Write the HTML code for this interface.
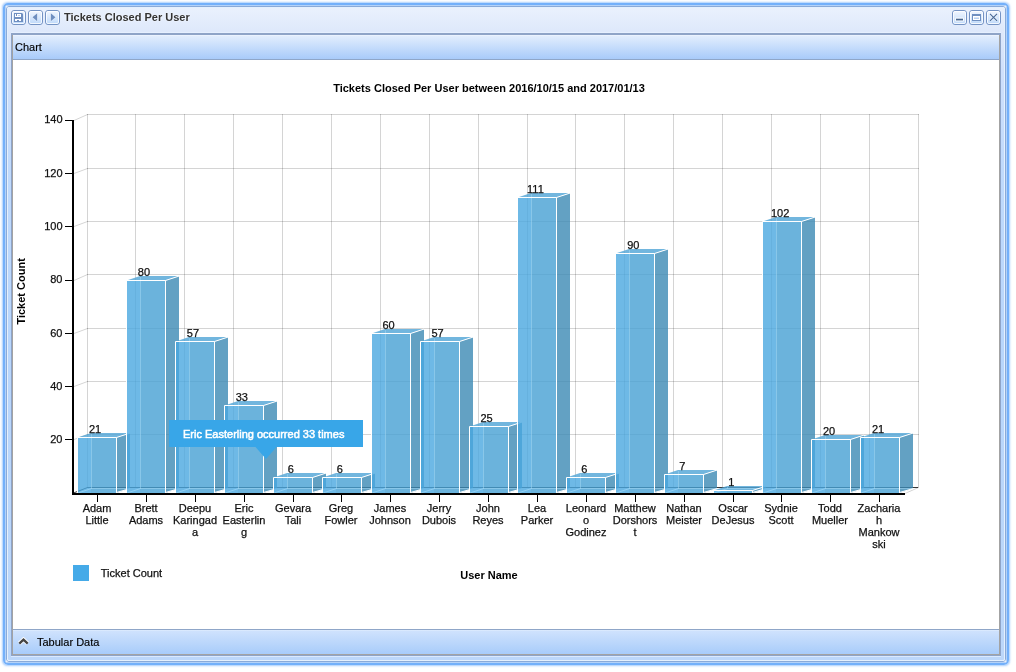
<!DOCTYPE html>
<html><head><meta charset="utf-8">
<style>
html,body{margin:0;padding:0;width:1016px;height:672px;overflow:hidden;background:#fff;font-family:"Liberation Sans",sans-serif;}
.a{position:absolute;box-sizing:border-box}
.t{will-change:transform}
svg text.lbl{font-family:"Liberation Sans",sans-serif;font-size:11px;fill:#111;stroke:#111;stroke-width:0.25px}
svg text.ttl{font-family:"Liberation Sans",sans-serif;font-size:11px;font-weight:bold;fill:#000}
svg text.tip{font-family:"Liberation Sans",sans-serif;font-size:11px;fill:#fff;stroke:#fff;stroke-width:0.5px}
</style></head><body>
<!-- window frame -->
<div class="a" style="left:3px;top:3px;width:1006px;height:662px;border-radius:5px;box-shadow:0 0 2px 0.5px rgba(110,172,250,0.6)"></div>
<div class="a" style="left:3px;top:3px;width:1006px;height:662px;border:2px solid #73b0fa;border-radius:5px"></div>
<div class="a" style="left:5px;top:5px;width:1002px;height:658px;border:1px solid #b4d2f8;border-radius:2px"></div>
<div class="a" style="left:6px;top:6px;width:1000px;height:656px;border:1px solid #8aaad8;border-radius:3px"></div>
<div class="a" style="left:7px;top:7px;width:998px;height:654px;border:1px solid #e4f0fe;border-radius:2px;
 background:linear-gradient(#eaf1fd 0px,#dfe9fb 22px,#cfe0fc 62px,#c0dafc 160px,#b8d6fc 330px,#bcd7fa 654px)"></div>
<!-- title -->
<div class="a t" style="left:64px;top:10px;font-weight:bold;font-size:11px;color:#333;line-height:14px;white-space:nowrap;text-shadow:0 0 2px #fff">Tickets Closed Per User</div>
<!-- panel -->
<div class="a" style="left:11px;top:32px;width:990px;height:625px;border-top:1px solid rgba(235,244,255,0.6);border-bottom:1px solid rgba(225,238,255,0.85)"></div>
<div class="a" style="left:11px;top:33px;width:990px;height:623px;border:1px solid #8fa4c7;border-top-width:2px"></div>
<div class="a" style="left:12px;top:35px;width:988px;height:620px;border:1px solid #a3a3a3;border-top:0"></div>
<div class="a" style="left:13px;top:35px;width:986px;height:24px;background:linear-gradient(#f4f8ff 0px,#e2edfd 1px,#a8cbfa 24px)"></div>
<div class="a" style="left:13px;top:59px;width:986px;height:1px;background:#8fa6c8"></div>
<div class="a" style="left:13px;top:60px;width:986px;height:569px;background:#fff"></div>
<div class="a" style="left:13px;top:629px;width:986px;height:1px;background:#8fa6c8"></div>
<div class="a" style="left:13px;top:630px;width:986px;height:24px;background:linear-gradient(#e4f0fe 0px,#cfe2fd 1px,#a8ccfa 24px)"></div>
<div class="a t" style="left:15px;top:41px;font-size:11px;color:#000;-webkit-text-stroke:0.15px #000;line-height:13px">Chart</div>
<div class="a t" style="left:37px;top:636px;font-size:11px;color:#000;-webkit-text-stroke:0.15px #000;line-height:13px">Tabular Data</div>
<svg width="1016" height="672" style="position:absolute;left:0;top:0;will-change:transform">
<defs>
 <linearGradient id="bg" x1="0" y1="0" x2="0" y2="1"><stop offset="0" stop-color="#f4f8ff"/><stop offset="1" stop-color="#bcd8fa"/></linearGradient>
</defs>
<rect x="11.5" y="10.5" width="14" height="14" rx="2.5" fill="url(#bg)" stroke="#7493c4" stroke-width="1"/><rect x="12.5" y="11.5" width="12" height="12" rx="1.5" fill="none" stroke="#fff" stroke-opacity="0.8" stroke-width="1"/>
<rect x="28.5" y="10.5" width="14" height="14" rx="2.5" fill="url(#bg)" stroke="#7493c4" stroke-width="1"/><rect x="29.5" y="11.5" width="12" height="12" rx="1.5" fill="none" stroke="#fff" stroke-opacity="0.8" stroke-width="1"/>
<rect x="45.5" y="10.5" width="14" height="14" rx="2.5" fill="url(#bg)" stroke="#7493c4" stroke-width="1"/><rect x="46.5" y="11.5" width="12" height="12" rx="1.5" fill="none" stroke="#fff" stroke-opacity="0.8" stroke-width="1"/>
<rect x="952.5" y="10.5" width="14" height="14" rx="2.5" fill="url(#bg)" stroke="#7493c4" stroke-width="1"/><rect x="953.5" y="11.5" width="12" height="12" rx="1.5" fill="none" stroke="#fff" stroke-opacity="0.8" stroke-width="1"/>
<rect x="969.5" y="10.5" width="14" height="14" rx="2.5" fill="url(#bg)" stroke="#7493c4" stroke-width="1"/><rect x="970.5" y="11.5" width="12" height="12" rx="1.5" fill="none" stroke="#fff" stroke-opacity="0.8" stroke-width="1"/>
<rect x="986.5" y="10.5" width="14" height="14" rx="2.5" fill="url(#bg)" stroke="#7493c4" stroke-width="1"/><rect x="987.5" y="11.5" width="12" height="12" rx="1.5" fill="none" stroke="#fff" stroke-opacity="0.8" stroke-width="1"/>
<path d="M14,13 H22 L23,14 V22 H14 Z" fill="#6f8fc0"/>
<rect x="15" y="14" width="6" height="3" fill="#fff"/>
<rect x="16" y="14" width="1" height="2" fill="#6f8fc0"/>
<rect x="18" y="15" width="2" height="1" fill="#b8cdec"/>
<path d="M15,19 H21 V21 H19 V20 H17 V21 H15 Z" fill="#fff"/>
<path d="M37.2,13.3 V21.2 L32.5,17.25 Z" fill="#6f8fc0" stroke="#fff" stroke-width="0.8" stroke-opacity="0.7" paint-order="stroke"/>
<path d="M50.8,13.3 V21.2 L55.5,17.25 Z" fill="#6f8fc0" stroke="#fff" stroke-width="0.8" stroke-opacity="0.7" paint-order="stroke"/>
<rect x="955" y="17.5" width="9" height="4" fill="#fff" opacity="0.8" rx="1"/>
<rect x="956" y="18.7" width="7" height="1.7" fill="#4a6890"/>
<rect x="972.5" y="14.5" width="8" height="6" fill="#fff" stroke="#6f8fc0" stroke-width="1"/>
<rect x="972" y="14" width="9" height="2" fill="#6f8fc0"/>
<rect x="974" y="17.5" width="5" height="1.5" fill="#b8d0f0"/>
<path d="M990,13.8 L997,20.8 M997,13.8 L990,20.8" stroke="#fff" stroke-opacity="0.6" stroke-width="2.4"/>
<path d="M990,13.8 L997,20.8 M997,13.8 L990,20.8" stroke="#4a6a98" stroke-width="1.2"/>
<!-- footer chevron -->
<polyline points="19.3,643.6 23.5,639.6 27.7,643.6" fill="none" stroke="#fff" stroke-width="4.2" opacity="0.95"/>
<polyline points="19.3,643.6 23.5,639.6 27.7,643.6" fill="none" stroke="#454545" stroke-width="2.3"/>
<line x1="87" y1="434.5" x2="919" y2="434.5" stroke="#000" stroke-opacity="0.17" stroke-width="1" />
<line x1="87" y1="381.5" x2="919" y2="381.5" stroke="#000" stroke-opacity="0.17" stroke-width="1" />
<line x1="87" y1="328.5" x2="919" y2="328.5" stroke="#000" stroke-opacity="0.17" stroke-width="1" />
<line x1="87" y1="274.5" x2="919" y2="274.5" stroke="#000" stroke-opacity="0.17" stroke-width="1" />
<line x1="87" y1="221.5" x2="919" y2="221.5" stroke="#000" stroke-opacity="0.17" stroke-width="1" />
<line x1="87" y1="168.5" x2="919" y2="168.5" stroke="#000" stroke-opacity="0.17" stroke-width="1" />
<line x1="87" y1="114.5" x2="919" y2="114.5" stroke="#000" stroke-opacity="0.17" stroke-width="1" />
<line x1="87.5" y1="114" x2="87.5" y2="488" stroke="#000" stroke-opacity="0.17" stroke-width="1" />
<line x1="135.5" y1="114" x2="135.5" y2="488" stroke="#000" stroke-opacity="0.17" stroke-width="1" />
<line x1="184.5" y1="114" x2="184.5" y2="488" stroke="#000" stroke-opacity="0.17" stroke-width="1" />
<line x1="233.5" y1="114" x2="233.5" y2="488" stroke="#000" stroke-opacity="0.17" stroke-width="1" />
<line x1="282.5" y1="114" x2="282.5" y2="488" stroke="#000" stroke-opacity="0.17" stroke-width="1" />
<line x1="331.5" y1="114" x2="331.5" y2="488" stroke="#000" stroke-opacity="0.17" stroke-width="1" />
<line x1="380.5" y1="114" x2="380.5" y2="488" stroke="#000" stroke-opacity="0.17" stroke-width="1" />
<line x1="429.5" y1="114" x2="429.5" y2="488" stroke="#000" stroke-opacity="0.17" stroke-width="1" />
<line x1="478.5" y1="114" x2="478.5" y2="488" stroke="#000" stroke-opacity="0.17" stroke-width="1" />
<line x1="527.5" y1="114" x2="527.5" y2="488" stroke="#000" stroke-opacity="0.17" stroke-width="1" />
<line x1="575.5" y1="114" x2="575.5" y2="488" stroke="#000" stroke-opacity="0.17" stroke-width="1" />
<line x1="624.5" y1="114" x2="624.5" y2="488" stroke="#000" stroke-opacity="0.17" stroke-width="1" />
<line x1="673.5" y1="114" x2="673.5" y2="488" stroke="#000" stroke-opacity="0.17" stroke-width="1" />
<line x1="722.5" y1="114" x2="722.5" y2="488" stroke="#000" stroke-opacity="0.17" stroke-width="1" />
<line x1="771.5" y1="114" x2="771.5" y2="488" stroke="#000" stroke-opacity="0.17" stroke-width="1" />
<line x1="820.5" y1="114" x2="820.5" y2="488" stroke="#000" stroke-opacity="0.17" stroke-width="1" />
<line x1="869.5" y1="114" x2="869.5" y2="488" stroke="#000" stroke-opacity="0.17" stroke-width="1" />
<line x1="918.5" y1="114" x2="918.5" y2="488" stroke="#000" stroke-opacity="0.17" stroke-width="1" />
<line x1="87" y1="487.5" x2="918" y2="487.5" stroke="#3a3a3a" stroke-width="1"/>
<line x1="73.5" y1="493" x2="87.5" y2="487.5" stroke="#3a3a3a" stroke-width="1"/>
<line x1="74" y1="439.5" x2="87.5" y2="434.5" stroke="#000" stroke-opacity="0.17" stroke-width="1"/>
<line x1="74" y1="386.5" x2="87.5" y2="381.5" stroke="#000" stroke-opacity="0.17" stroke-width="1"/>
<line x1="74" y1="333.5" x2="87.5" y2="328.5" stroke="#000" stroke-opacity="0.17" stroke-width="1"/>
<line x1="74" y1="280.5" x2="87.5" y2="274.5" stroke="#000" stroke-opacity="0.17" stroke-width="1"/>
<line x1="74" y1="226.5" x2="87.5" y2="221.5" stroke="#000" stroke-opacity="0.17" stroke-width="1"/>
<line x1="74" y1="173.5" x2="87.5" y2="168.5" stroke="#000" stroke-opacity="0.17" stroke-width="1"/>
<line x1="74" y1="120.5" x2="87.5" y2="114.5" stroke="#000" stroke-opacity="0.17" stroke-width="1"/>
<line x1="905" y1="493.5" x2="918.5" y2="487.5" stroke="#000" stroke-opacity="0.17" stroke-width="1"/>
<polygon points="116.5,437.5 130.0,433.1 130.0,488.6 116.5,493.0" fill="rgb(60,138,180)" fill-opacity="0.8"/>
<polygon points="77.5,437.5 91.0,433.1 130.0,433.1 116.5,437.5" fill="rgb(79,164,214)" fill-opacity="0.8"/>
<rect x="78" y="438" width="13" height="55.0" fill="rgb(74,168,224)" fill-opacity="0.8"/>
<rect x="91" y="438" width="25" height="55.0" fill="rgb(70,160,211)" fill-opacity="0.8"/>
<line x1="91.5" y1="434.1" x2="91.5" y2="488.6" stroke="#a8dcf8" stroke-opacity="0.5" stroke-width="1"/>
<line x1="91" y1="488.5" x2="130.0" y2="488.5" stroke="#a8dcf8" stroke-opacity="0.5" stroke-width="1"/>
<line x1="78" y1="493.0" x2="91.5" y2="488.5" stroke="#a8dcf8" stroke-opacity="0.6" stroke-width="1"/>
<path d="M77.5,493.0 V437.5 H116.5 V493.0 M116.5,437.5 L130.0,433.1 M116.5,492.5 L130.0,488.6" fill="none" stroke="#fff" stroke-width="1"/>
<polygon points="165.5,280.5 179.0,276.1 179.0,488.6 165.5,493.0" fill="rgb(60,138,180)" fill-opacity="0.8"/>
<polygon points="126.5,280.5 140.0,276.1 179.0,276.1 165.5,280.5" fill="rgb(79,164,214)" fill-opacity="0.8"/>
<rect x="127" y="281" width="13" height="212.0" fill="rgb(74,168,224)" fill-opacity="0.8"/>
<rect x="140" y="281" width="25" height="212.0" fill="rgb(70,160,211)" fill-opacity="0.8"/>
<line x1="140.5" y1="277.1" x2="140.5" y2="488.6" stroke="#a8dcf8" stroke-opacity="0.5" stroke-width="1"/>
<line x1="140" y1="488.5" x2="179.0" y2="488.5" stroke="#a8dcf8" stroke-opacity="0.5" stroke-width="1"/>
<line x1="127" y1="493.0" x2="140.5" y2="488.5" stroke="#a8dcf8" stroke-opacity="0.6" stroke-width="1"/>
<path d="M126.5,493.0 V280.5 H165.5 V493.0 M165.5,280.5 L179.0,276.1 M165.5,492.5 L179.0,488.6" fill="none" stroke="#fff" stroke-width="1"/>
<polygon points="214.5,341.5 228.0,337.1 228.0,488.6 214.5,493.0" fill="rgb(60,138,180)" fill-opacity="0.8"/>
<polygon points="175.5,341.5 189.0,337.1 228.0,337.1 214.5,341.5" fill="rgb(79,164,214)" fill-opacity="0.8"/>
<rect x="176" y="342" width="13" height="151.0" fill="rgb(74,168,224)" fill-opacity="0.8"/>
<rect x="189" y="342" width="25" height="151.0" fill="rgb(70,160,211)" fill-opacity="0.8"/>
<line x1="189.5" y1="338.1" x2="189.5" y2="488.6" stroke="#a8dcf8" stroke-opacity="0.5" stroke-width="1"/>
<line x1="189" y1="488.5" x2="228.0" y2="488.5" stroke="#a8dcf8" stroke-opacity="0.5" stroke-width="1"/>
<line x1="176" y1="493.0" x2="189.5" y2="488.5" stroke="#a8dcf8" stroke-opacity="0.6" stroke-width="1"/>
<path d="M175.5,493.0 V341.5 H214.5 V493.0 M214.5,341.5 L228.0,337.1 M214.5,492.5 L228.0,488.6" fill="none" stroke="#fff" stroke-width="1"/>
<polygon points="263.5,405.5 277.0,401.1 277.0,488.6 263.5,493.0" fill="rgb(60,138,180)" fill-opacity="0.8"/>
<polygon points="224.5,405.5 238.0,401.1 277.0,401.1 263.5,405.5" fill="rgb(79,164,214)" fill-opacity="0.8"/>
<rect x="225" y="406" width="13" height="87.0" fill="rgb(74,168,224)" fill-opacity="0.8"/>
<rect x="238" y="406" width="25" height="87.0" fill="rgb(70,160,211)" fill-opacity="0.8"/>
<line x1="238.5" y1="402.1" x2="238.5" y2="488.6" stroke="#a8dcf8" stroke-opacity="0.5" stroke-width="1"/>
<line x1="238" y1="488.5" x2="277.0" y2="488.5" stroke="#a8dcf8" stroke-opacity="0.5" stroke-width="1"/>
<line x1="225" y1="493.0" x2="238.5" y2="488.5" stroke="#a8dcf8" stroke-opacity="0.6" stroke-width="1"/>
<path d="M224.5,493.0 V405.5 H263.5 V493.0 M263.5,405.5 L277.0,401.1 M263.5,492.5 L277.0,488.6" fill="none" stroke="#fff" stroke-width="1"/>
<polygon points="312.5,477.5 326.0,473.1 326.0,488.6 312.5,493.0" fill="rgb(60,138,180)" fill-opacity="0.8"/>
<polygon points="273.5,477.5 287.0,473.1 326.0,473.1 312.5,477.5" fill="rgb(79,164,214)" fill-opacity="0.8"/>
<rect x="274" y="478" width="13" height="15.0" fill="rgb(74,168,224)" fill-opacity="0.8"/>
<rect x="287" y="478" width="25" height="15.0" fill="rgb(70,160,211)" fill-opacity="0.8"/>
<line x1="287.5" y1="474.1" x2="287.5" y2="488.6" stroke="#a8dcf8" stroke-opacity="0.5" stroke-width="1"/>
<line x1="287" y1="488.5" x2="326.0" y2="488.5" stroke="#a8dcf8" stroke-opacity="0.5" stroke-width="1"/>
<line x1="274" y1="493.0" x2="287.5" y2="488.5" stroke="#a8dcf8" stroke-opacity="0.6" stroke-width="1"/>
<path d="M273.5,493.0 V477.5 H312.5 V493.0 M312.5,477.5 L326.0,473.1 M312.5,492.5 L326.0,488.6" fill="none" stroke="#fff" stroke-width="1"/>
<polygon points="361.5,477.5 375.0,473.1 375.0,488.6 361.5,493.0" fill="rgb(60,138,180)" fill-opacity="0.8"/>
<polygon points="322.5,477.5 336.0,473.1 375.0,473.1 361.5,477.5" fill="rgb(79,164,214)" fill-opacity="0.8"/>
<rect x="323" y="478" width="13" height="15.0" fill="rgb(74,168,224)" fill-opacity="0.8"/>
<rect x="336" y="478" width="25" height="15.0" fill="rgb(70,160,211)" fill-opacity="0.8"/>
<line x1="336.5" y1="474.1" x2="336.5" y2="488.6" stroke="#a8dcf8" stroke-opacity="0.5" stroke-width="1"/>
<line x1="336" y1="488.5" x2="375.0" y2="488.5" stroke="#a8dcf8" stroke-opacity="0.5" stroke-width="1"/>
<line x1="323" y1="493.0" x2="336.5" y2="488.5" stroke="#a8dcf8" stroke-opacity="0.6" stroke-width="1"/>
<path d="M322.5,493.0 V477.5 H361.5 V493.0 M361.5,477.5 L375.0,473.1 M361.5,492.5 L375.0,488.6" fill="none" stroke="#fff" stroke-width="1"/>
<polygon points="410.5,333.5 424.0,329.1 424.0,488.6 410.5,493.0" fill="rgb(60,138,180)" fill-opacity="0.8"/>
<polygon points="371.5,333.5 385.0,329.1 424.0,329.1 410.5,333.5" fill="rgb(79,164,214)" fill-opacity="0.8"/>
<rect x="372" y="334" width="13" height="159.0" fill="rgb(74,168,224)" fill-opacity="0.8"/>
<rect x="385" y="334" width="25" height="159.0" fill="rgb(70,160,211)" fill-opacity="0.8"/>
<line x1="385.5" y1="330.1" x2="385.5" y2="488.6" stroke="#a8dcf8" stroke-opacity="0.5" stroke-width="1"/>
<line x1="385" y1="488.5" x2="424.0" y2="488.5" stroke="#a8dcf8" stroke-opacity="0.5" stroke-width="1"/>
<line x1="372" y1="493.0" x2="385.5" y2="488.5" stroke="#a8dcf8" stroke-opacity="0.6" stroke-width="1"/>
<path d="M371.5,493.0 V333.5 H410.5 V493.0 M410.5,333.5 L424.0,329.1 M410.5,492.5 L424.0,488.6" fill="none" stroke="#fff" stroke-width="1"/>
<polygon points="459.5,341.5 473.0,337.1 473.0,488.6 459.5,493.0" fill="rgb(60,138,180)" fill-opacity="0.8"/>
<polygon points="420.5,341.5 434.0,337.1 473.0,337.1 459.5,341.5" fill="rgb(79,164,214)" fill-opacity="0.8"/>
<rect x="421" y="342" width="13" height="151.0" fill="rgb(74,168,224)" fill-opacity="0.8"/>
<rect x="434" y="342" width="25" height="151.0" fill="rgb(70,160,211)" fill-opacity="0.8"/>
<line x1="434.5" y1="338.1" x2="434.5" y2="488.6" stroke="#a8dcf8" stroke-opacity="0.5" stroke-width="1"/>
<line x1="434" y1="488.5" x2="473.0" y2="488.5" stroke="#a8dcf8" stroke-opacity="0.5" stroke-width="1"/>
<line x1="421" y1="493.0" x2="434.5" y2="488.5" stroke="#a8dcf8" stroke-opacity="0.6" stroke-width="1"/>
<path d="M420.5,493.0 V341.5 H459.5 V493.0 M459.5,341.5 L473.0,337.1 M459.5,492.5 L473.0,488.6" fill="none" stroke="#fff" stroke-width="1"/>
<polygon points="508.5,426.5 522.0,422.1 522.0,488.6 508.5,493.0" fill="rgb(60,138,180)" fill-opacity="0.8"/>
<polygon points="469.5,426.5 483.0,422.1 522.0,422.1 508.5,426.5" fill="rgb(79,164,214)" fill-opacity="0.8"/>
<rect x="470" y="427" width="13" height="66.0" fill="rgb(74,168,224)" fill-opacity="0.8"/>
<rect x="483" y="427" width="25" height="66.0" fill="rgb(70,160,211)" fill-opacity="0.8"/>
<line x1="483.5" y1="423.1" x2="483.5" y2="488.6" stroke="#a8dcf8" stroke-opacity="0.5" stroke-width="1"/>
<line x1="483" y1="488.5" x2="522.0" y2="488.5" stroke="#a8dcf8" stroke-opacity="0.5" stroke-width="1"/>
<line x1="470" y1="493.0" x2="483.5" y2="488.5" stroke="#a8dcf8" stroke-opacity="0.6" stroke-width="1"/>
<path d="M469.5,493.0 V426.5 H508.5 V493.0 M508.5,426.5 L522.0,422.1 M508.5,492.5 L522.0,488.6" fill="none" stroke="#fff" stroke-width="1"/>
<polygon points="556.5,197.5 570.0,193.1 570.0,488.6 556.5,493.0" fill="rgb(60,138,180)" fill-opacity="0.8"/>
<polygon points="517.5,197.5 531.0,193.1 570.0,193.1 556.5,197.5" fill="rgb(79,164,214)" fill-opacity="0.8"/>
<rect x="518" y="198" width="13" height="295.0" fill="rgb(74,168,224)" fill-opacity="0.8"/>
<rect x="531" y="198" width="25" height="295.0" fill="rgb(70,160,211)" fill-opacity="0.8"/>
<line x1="531.5" y1="194.1" x2="531.5" y2="488.6" stroke="#a8dcf8" stroke-opacity="0.5" stroke-width="1"/>
<line x1="531" y1="488.5" x2="570.0" y2="488.5" stroke="#a8dcf8" stroke-opacity="0.5" stroke-width="1"/>
<line x1="518" y1="493.0" x2="531.5" y2="488.5" stroke="#a8dcf8" stroke-opacity="0.6" stroke-width="1"/>
<path d="M517.5,493.0 V197.5 H556.5 V493.0 M556.5,197.5 L570.0,193.1 M556.5,492.5 L570.0,488.6" fill="none" stroke="#fff" stroke-width="1"/>
<polygon points="605.5,477.5 619.0,473.1 619.0,488.6 605.5,493.0" fill="rgb(60,138,180)" fill-opacity="0.8"/>
<polygon points="566.5,477.5 580.0,473.1 619.0,473.1 605.5,477.5" fill="rgb(79,164,214)" fill-opacity="0.8"/>
<rect x="567" y="478" width="13" height="15.0" fill="rgb(74,168,224)" fill-opacity="0.8"/>
<rect x="580" y="478" width="25" height="15.0" fill="rgb(70,160,211)" fill-opacity="0.8"/>
<line x1="580.5" y1="474.1" x2="580.5" y2="488.6" stroke="#a8dcf8" stroke-opacity="0.5" stroke-width="1"/>
<line x1="580" y1="488.5" x2="619.0" y2="488.5" stroke="#a8dcf8" stroke-opacity="0.5" stroke-width="1"/>
<line x1="567" y1="493.0" x2="580.5" y2="488.5" stroke="#a8dcf8" stroke-opacity="0.6" stroke-width="1"/>
<path d="M566.5,493.0 V477.5 H605.5 V493.0 M605.5,477.5 L619.0,473.1 M605.5,492.5 L619.0,488.6" fill="none" stroke="#fff" stroke-width="1"/>
<polygon points="654.5,253.5 668.0,249.1 668.0,488.6 654.5,493.0" fill="rgb(60,138,180)" fill-opacity="0.8"/>
<polygon points="615.5,253.5 629.0,249.1 668.0,249.1 654.5,253.5" fill="rgb(79,164,214)" fill-opacity="0.8"/>
<rect x="616" y="254" width="13" height="239.0" fill="rgb(74,168,224)" fill-opacity="0.8"/>
<rect x="629" y="254" width="25" height="239.0" fill="rgb(70,160,211)" fill-opacity="0.8"/>
<line x1="629.5" y1="250.1" x2="629.5" y2="488.6" stroke="#a8dcf8" stroke-opacity="0.5" stroke-width="1"/>
<line x1="629" y1="488.5" x2="668.0" y2="488.5" stroke="#a8dcf8" stroke-opacity="0.5" stroke-width="1"/>
<line x1="616" y1="493.0" x2="629.5" y2="488.5" stroke="#a8dcf8" stroke-opacity="0.6" stroke-width="1"/>
<path d="M615.5,493.0 V253.5 H654.5 V493.0 M654.5,253.5 L668.0,249.1 M654.5,492.5 L668.0,488.6" fill="none" stroke="#fff" stroke-width="1"/>
<polygon points="703.5,474.5 717.0,470.1 717.0,488.6 703.5,493.0" fill="rgb(60,138,180)" fill-opacity="0.8"/>
<polygon points="664.5,474.5 678.0,470.1 717.0,470.1 703.5,474.5" fill="rgb(79,164,214)" fill-opacity="0.8"/>
<rect x="665" y="475" width="13" height="18.0" fill="rgb(74,168,224)" fill-opacity="0.8"/>
<rect x="678" y="475" width="25" height="18.0" fill="rgb(70,160,211)" fill-opacity="0.8"/>
<line x1="678.5" y1="471.1" x2="678.5" y2="488.6" stroke="#a8dcf8" stroke-opacity="0.5" stroke-width="1"/>
<line x1="678" y1="488.5" x2="717.0" y2="488.5" stroke="#a8dcf8" stroke-opacity="0.5" stroke-width="1"/>
<line x1="665" y1="493.0" x2="678.5" y2="488.5" stroke="#a8dcf8" stroke-opacity="0.6" stroke-width="1"/>
<path d="M664.5,493.0 V474.5 H703.5 V493.0 M703.5,474.5 L717.0,470.1 M703.5,492.5 L717.0,488.6" fill="none" stroke="#fff" stroke-width="1"/>
<polygon points="752.5,490.5 766.0,486.1 766.0,488.6 752.5,493.0" fill="rgb(60,138,180)" fill-opacity="0.8"/>
<polygon points="713.5,490.5 727.0,486.1 766.0,486.1 752.5,490.5" fill="rgb(79,164,214)" fill-opacity="0.8"/>
<rect x="714" y="491" width="13" height="2.0" fill="rgb(74,168,224)" fill-opacity="0.8"/>
<rect x="727" y="491" width="25" height="2.0" fill="rgb(70,160,211)" fill-opacity="0.8"/>
<line x1="727.5" y1="487.1" x2="727.5" y2="488.6" stroke="#a8dcf8" stroke-opacity="0.5" stroke-width="1"/>
<line x1="727" y1="488.5" x2="766.0" y2="488.5" stroke="#a8dcf8" stroke-opacity="0.5" stroke-width="1"/>
<line x1="714" y1="493.0" x2="727.5" y2="488.5" stroke="#a8dcf8" stroke-opacity="0.6" stroke-width="1"/>
<path d="M713.5,493.0 V490.5 H752.5 V493.0 M752.5,490.5 L766.0,486.1 M752.5,492.5 L766.0,488.6" fill="none" stroke="#fff" stroke-width="1"/>
<polygon points="801.5,221.5 815.0,217.1 815.0,488.6 801.5,493.0" fill="rgb(60,138,180)" fill-opacity="0.8"/>
<polygon points="762.5,221.5 776.0,217.1 815.0,217.1 801.5,221.5" fill="rgb(79,164,214)" fill-opacity="0.8"/>
<rect x="763" y="222" width="13" height="271.0" fill="rgb(74,168,224)" fill-opacity="0.8"/>
<rect x="776" y="222" width="25" height="271.0" fill="rgb(70,160,211)" fill-opacity="0.8"/>
<line x1="776.5" y1="218.1" x2="776.5" y2="488.6" stroke="#a8dcf8" stroke-opacity="0.5" stroke-width="1"/>
<line x1="776" y1="488.5" x2="815.0" y2="488.5" stroke="#a8dcf8" stroke-opacity="0.5" stroke-width="1"/>
<line x1="763" y1="493.0" x2="776.5" y2="488.5" stroke="#a8dcf8" stroke-opacity="0.6" stroke-width="1"/>
<path d="M762.5,493.0 V221.5 H801.5 V493.0 M801.5,221.5 L815.0,217.1 M801.5,492.5 L815.0,488.6" fill="none" stroke="#fff" stroke-width="1"/>
<polygon points="850.5,439.5 864.0,435.1 864.0,488.6 850.5,493.0" fill="rgb(60,138,180)" fill-opacity="0.8"/>
<polygon points="811.5,439.5 825.0,435.1 864.0,435.1 850.5,439.5" fill="rgb(79,164,214)" fill-opacity="0.8"/>
<rect x="812" y="440" width="13" height="53.0" fill="rgb(74,168,224)" fill-opacity="0.8"/>
<rect x="825" y="440" width="25" height="53.0" fill="rgb(70,160,211)" fill-opacity="0.8"/>
<line x1="825.5" y1="436.1" x2="825.5" y2="488.6" stroke="#a8dcf8" stroke-opacity="0.5" stroke-width="1"/>
<line x1="825" y1="488.5" x2="864.0" y2="488.5" stroke="#a8dcf8" stroke-opacity="0.5" stroke-width="1"/>
<line x1="812" y1="493.0" x2="825.5" y2="488.5" stroke="#a8dcf8" stroke-opacity="0.6" stroke-width="1"/>
<path d="M811.5,493.0 V439.5 H850.5 V493.0 M850.5,439.5 L864.0,435.1 M850.5,492.5 L864.0,488.6" fill="none" stroke="#fff" stroke-width="1"/>
<polygon points="899.5,437.5 913.0,433.1 913.0,488.6 899.5,493.0" fill="rgb(60,138,180)" fill-opacity="0.8"/>
<polygon points="860.5,437.5 874.0,433.1 913.0,433.1 899.5,437.5" fill="rgb(79,164,214)" fill-opacity="0.8"/>
<rect x="861" y="438" width="13" height="55.0" fill="rgb(74,168,224)" fill-opacity="0.8"/>
<rect x="874" y="438" width="25" height="55.0" fill="rgb(70,160,211)" fill-opacity="0.8"/>
<line x1="874.5" y1="434.1" x2="874.5" y2="488.6" stroke="#a8dcf8" stroke-opacity="0.5" stroke-width="1"/>
<line x1="874" y1="488.5" x2="913.0" y2="488.5" stroke="#a8dcf8" stroke-opacity="0.5" stroke-width="1"/>
<line x1="861" y1="493.0" x2="874.5" y2="488.5" stroke="#a8dcf8" stroke-opacity="0.6" stroke-width="1"/>
<path d="M860.5,493.0 V437.5 H899.5 V493.0 M899.5,437.5 L913.0,433.1 M899.5,492.5 L913.0,488.6" fill="none" stroke="#fff" stroke-width="1"/>
<rect x="72" y="120" width="2" height="375" fill="#000"/>
<rect x="72" y="493" width="833" height="2" fill="#000"/>
<rect x="65" y="439" width="7" height="1" fill="#000"/>
<text x="62.5" y="443.11" text-anchor="end" class="lbl">20</text>
<rect x="65" y="386" width="7" height="1" fill="#000"/>
<text x="62.5" y="389.83" text-anchor="end" class="lbl">40</text>
<rect x="65" y="333" width="7" height="1" fill="#000"/>
<text x="62.5" y="336.54" text-anchor="end" class="lbl">60</text>
<rect x="65" y="280" width="7" height="1" fill="#000"/>
<text x="62.5" y="283.26" text-anchor="end" class="lbl">80</text>
<rect x="65" y="226" width="7" height="1" fill="#000"/>
<text x="62.5" y="229.97" text-anchor="end" class="lbl">100</text>
<rect x="65" y="173" width="7" height="1" fill="#000"/>
<text x="62.5" y="176.69" text-anchor="end" class="lbl">120</text>
<rect x="65" y="120" width="7" height="1" fill="#000"/>
<text x="62.5" y="123.40" text-anchor="end" class="lbl">140</text>
<rect x="97" y="495" width="1" height="7" fill="#000"/>
<text x="97.0" y="511.5" text-anchor="middle" class="lbl">Adam</text>
<text x="97.0" y="523.5" text-anchor="middle" class="lbl">Little</text>
<text x="95.0" y="433" text-anchor="middle" class="lbl">21</text>
<rect x="146" y="495" width="1" height="7" fill="#000"/>
<text x="146.0" y="511.5" text-anchor="middle" class="lbl">Brett</text>
<text x="146.0" y="523.5" text-anchor="middle" class="lbl">Adams</text>
<text x="143.9" y="276" text-anchor="middle" class="lbl">80</text>
<rect x="195" y="495" width="1" height="7" fill="#000"/>
<text x="195.0" y="511.5" text-anchor="middle" class="lbl">Deepu</text>
<text x="195.0" y="523.5" text-anchor="middle" class="lbl">Karingad</text>
<text x="195.0" y="535.5" text-anchor="middle" class="lbl">a</text>
<text x="192.9" y="337" text-anchor="middle" class="lbl">57</text>
<rect x="244" y="495" width="1" height="7" fill="#000"/>
<text x="244.0" y="511.5" text-anchor="middle" class="lbl">Eric</text>
<text x="244.0" y="523.5" text-anchor="middle" class="lbl">Easterlin</text>
<text x="244.0" y="535.5" text-anchor="middle" class="lbl">g</text>
<text x="241.8" y="401" text-anchor="middle" class="lbl">33</text>
<rect x="293" y="495" width="1" height="7" fill="#000"/>
<text x="293.0" y="511.5" text-anchor="middle" class="lbl">Gevara</text>
<text x="293.0" y="523.5" text-anchor="middle" class="lbl">Tali</text>
<text x="290.7" y="473" text-anchor="middle" class="lbl">6</text>
<rect x="341" y="495" width="1" height="7" fill="#000"/>
<text x="341.0" y="511.5" text-anchor="middle" class="lbl">Greg</text>
<text x="341.0" y="523.5" text-anchor="middle" class="lbl">Fowler</text>
<text x="339.7" y="473" text-anchor="middle" class="lbl">6</text>
<rect x="390" y="495" width="1" height="7" fill="#000"/>
<text x="390.0" y="511.5" text-anchor="middle" class="lbl">James</text>
<text x="390.0" y="523.5" text-anchor="middle" class="lbl">Johnson</text>
<text x="388.6" y="329" text-anchor="middle" class="lbl">60</text>
<rect x="439" y="495" width="1" height="7" fill="#000"/>
<text x="439.0" y="511.5" text-anchor="middle" class="lbl">Jerry</text>
<text x="439.0" y="523.5" text-anchor="middle" class="lbl">Dubois</text>
<text x="437.6" y="337" text-anchor="middle" class="lbl">57</text>
<rect x="488" y="495" width="1" height="7" fill="#000"/>
<text x="488.0" y="511.5" text-anchor="middle" class="lbl">John</text>
<text x="488.0" y="523.5" text-anchor="middle" class="lbl">Reyes</text>
<text x="486.5" y="422" text-anchor="middle" class="lbl">25</text>
<rect x="537" y="495" width="1" height="7" fill="#000"/>
<text x="537.0" y="511.5" text-anchor="middle" class="lbl">Lea</text>
<text x="537.0" y="523.5" text-anchor="middle" class="lbl">Parker</text>
<text x="535.4" y="193" text-anchor="middle" class="lbl">111</text>
<rect x="586" y="495" width="1" height="7" fill="#000"/>
<text x="586.0" y="511.5" text-anchor="middle" class="lbl">Leonard</text>
<text x="586.0" y="523.5" text-anchor="middle" class="lbl">o</text>
<text x="586.0" y="535.5" text-anchor="middle" class="lbl">Godinez</text>
<text x="584.4" y="473" text-anchor="middle" class="lbl">6</text>
<rect x="635" y="495" width="1" height="7" fill="#000"/>
<text x="635.0" y="511.5" text-anchor="middle" class="lbl">Matthew</text>
<text x="635.0" y="523.5" text-anchor="middle" class="lbl">Dorshors</text>
<text x="635.0" y="535.5" text-anchor="middle" class="lbl">t</text>
<text x="633.3" y="249" text-anchor="middle" class="lbl">90</text>
<rect x="684" y="495" width="1" height="7" fill="#000"/>
<text x="684.0" y="511.5" text-anchor="middle" class="lbl">Nathan</text>
<text x="684.0" y="523.5" text-anchor="middle" class="lbl">Meister</text>
<text x="682.3" y="470" text-anchor="middle" class="lbl">7</text>
<rect x="733" y="495" width="1" height="7" fill="#000"/>
<text x="733.0" y="511.5" text-anchor="middle" class="lbl">Oscar</text>
<text x="733.0" y="523.5" text-anchor="middle" class="lbl">DeJesus</text>
<text x="731.2" y="486" text-anchor="middle" class="lbl">1</text>
<rect x="781" y="495" width="1" height="7" fill="#000"/>
<text x="781.0" y="511.5" text-anchor="middle" class="lbl">Sydnie</text>
<text x="781.0" y="523.5" text-anchor="middle" class="lbl">Scott</text>
<text x="780.1" y="217" text-anchor="middle" class="lbl">102</text>
<rect x="830" y="495" width="1" height="7" fill="#000"/>
<text x="830.0" y="511.5" text-anchor="middle" class="lbl">Todd</text>
<text x="830.0" y="523.5" text-anchor="middle" class="lbl">Mueller</text>
<text x="829.1" y="435" text-anchor="middle" class="lbl">20</text>
<rect x="879" y="495" width="1" height="7" fill="#000"/>
<text x="879.0" y="511.5" text-anchor="middle" class="lbl">Zacharia</text>
<text x="879.0" y="523.5" text-anchor="middle" class="lbl">h</text>
<text x="879.0" y="535.5" text-anchor="middle" class="lbl">Mankow</text>
<text x="879.0" y="547.5" text-anchor="middle" class="lbl">ski</text>
<text x="878.0" y="433" text-anchor="middle" class="lbl">21</text>
<text x="489" y="91.8" text-anchor="middle" class="ttl">Tickets Closed Per User between 2016/10/15 and 2017/01/13</text>
<text x="489" y="579" text-anchor="middle" class="ttl">User Name</text>
<text transform="translate(25.2,291.4) rotate(-90)" text-anchor="middle" class="ttl">Ticket Count</text>
<rect x="73" y="565" width="16" height="16" fill="#45aae8"/>
<text x="100.8" y="577" class="lbl">Ticket Count</text>
<rect x="169" y="420" width="194" height="27" fill="#38a6e8"/>
<polygon points="255.5,447 276.5,447 266,459" fill="#38a6e8"/>
<text x="183" y="438" class="tip">Eric Easterling occurred 33 times</text>
</svg>
</body></html>
